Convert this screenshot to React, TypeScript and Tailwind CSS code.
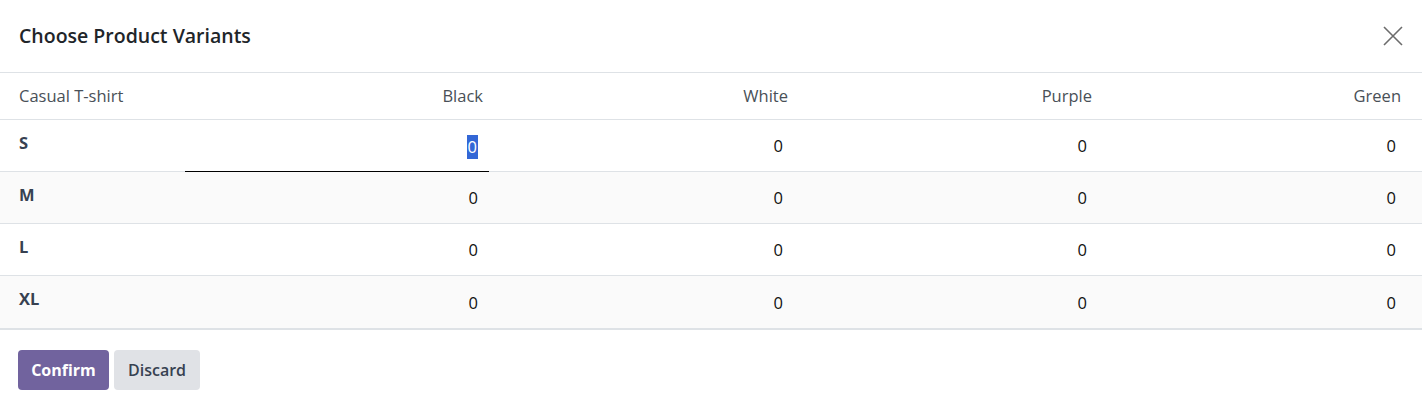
const colors = ["Black", "White", "Purple", "Green"]
const sizes = ["S", "M", "L", "XL"]

export default function App() {
  return (
    <div className="w-[1422px] h-[407px] bg-white font-['Open_Sans',sans-serif] text-[#212529] flex flex-col">
      {/* Header */}
      <div className="h-[73px] flex items-center justify-between pl-[19px] pr-[19px] border-b border-[#dee2e6]">
        <h4 className="text-[19.5px] font-semibold text-[#212529]">Choose Product Variants</h4>
        <svg width="20" height="20" viewBox="0 0 20 20" className="text-[#6c6c6c]">
          <path d="M1 1L19 19M19 1L1 19" stroke="currentColor" strokeWidth="1.6" fill="none" />
        </svg>
      </div>

      {/* Grid */}
      <div className="flex flex-col border-b-2 border-[#dee2e6]">
        <div className="grid grid-cols-[185px_304px_305px_304px_1fr] h-[47px] items-center border-b border-[#dee2e6] text-[16.5px] text-[#495057]">
          <div className="pl-[19px]">Casual T-shirt</div>
          {colors.map((c, i) => (
            <div key={c} className={`text-right ${i === 3 ? "pr-[21px]" : "pr-[6px]"}`}>
              {c}
            </div>
          ))}
        </div>
        {sizes.map((s, r) => (
          <div
            key={s}
            className={`grid grid-cols-[185px_304px_305px_304px_1fr] h-[52px] border-b border-[#dee2e6] last:border-b-0 text-[16.5px] ${
              r % 2 === 1 ? "bg-[#fafafa]" : "bg-white"
            }`}
          >
            <div className="pl-[19px] pt-[11px] font-bold text-[#374151]">{s}</div>
            {colors.map((c, i) => (
              <div
                key={c}
                className={`flex items-center justify-end pt-[2px] ${i === 3 ? "pr-[26px]" : "pr-[11px]"} ${
                  r === 0 && i === 0 ? "border-b border-black -mb-px" : ""
                }`}
              >
                {r === 0 && i === 0 ? (
                  <span className="bg-[#3367d6] text-white leading-[24px] px-px">0</span>
                ) : (
                  <span className="text-[#111]">0</span>
                )}
              </div>
            ))}
          </div>
        ))}
      </div>

      {/* Footer */}
      <div className="flex items-center gap-[5px] pl-[18px] pt-[20px]">
        <button className="h-[40px] w-[91px] rounded-[4px] bg-[#71639e] text-white font-bold text-[16px]">
          Confirm
        </button>
        <button className="h-[40px] w-[86px] rounded-[4px] bg-[#e0e2e6] text-[#374151] font-semibold text-[16px]">
          Discard
        </button>
      </div>
    </div>
  )
}
